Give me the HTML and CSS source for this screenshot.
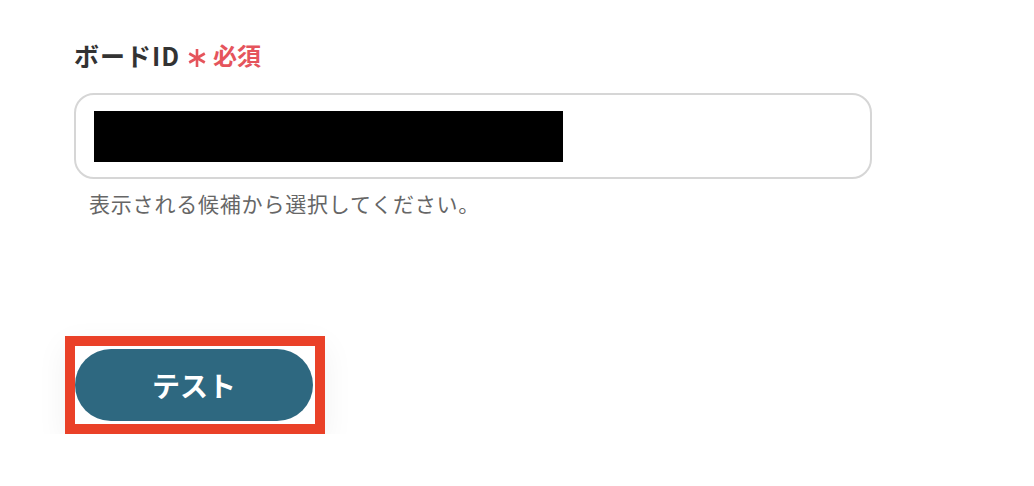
FILE: index.html
```html
<!DOCTYPE html>
<html lang="ja">
<head>
    <meta charset="UTF-8">
    <meta name="viewport" content="width=device-width, initial-scale=1.0">
    <title>ボードID</title>
    <link rel="stylesheet" href="styles.css">
</head>
<body>
    <div class="field">
        <label class="field-label" for="boardId">
            ボードID
            <svg class="required-mark" width="18" height="18" viewBox="0 0 18 18" aria-hidden="true">
                <g stroke="#e5545c" stroke-width="2.6" stroke-linecap="butt">
                    <line x1="9" y1="0" x2="9" y2="18"/>
                    <line x1="1.2" y1="4.5" x2="16.8" y2="13.5"/>
                    <line x1="1.2" y1="13.5" x2="16.8" y2="4.5"/>
                </g>
            </svg>
            <span class="required-text">必須</span>
        </label>
        <div class="input-box" id="boardId">
            <div class="redacted"></div>
        </div>
        <p class="hint">表示される候補から選択してください。</p>
    </div>

    <div class="actions">
        <div class="highlight">
            <button type="button" class="btn-test">テスト</button>
        </div>
    </div>
</body>
</html>
```

FILE: styles.css
```css
body {
    margin: 0;
    background: #fff;
    font-family: "Noto Sans CJK JP", "Noto Sans", sans-serif;
}

.field {
    padding: 38px 0 0 74px;
    width: 798px;
}

.field-label {
    display: flex;
    align-items: center;
    font-size: 25px;
    line-height: 34px;
    letter-spacing: 1px;
    font-weight: bold;
    color: #333;
}

.required-mark {
    margin-left: 8px;
    margin-top: 6px;
}

.required-text {
    margin-left: 7px;
    font-size: 24px;
    letter-spacing: 0;
    color: #e5545c;
}

.input-box {
    margin-top: 21px;
    border: 2px solid #d6d6d6;
    border-radius: 20px;
    padding: 16px 18px;
    height: 50px;
}

.redacted {
    width: 469px;
    height: 51px;
    background: #000;
}

.hint {
    margin: 9px 0 0 15px;
    font-size: 21px;
    line-height: 30px;
    letter-spacing: 0.8px;
    color: #666;
}

.actions {
    padding: 118px 0 0 65px;
}

.highlight {
    display: inline-block;
    border: 10px solid #ea4128;
    padding: 3px 2px 3px 0;
    box-shadow: 0 10px 30px rgba(0, 0, 0, 0.06);
}

.btn-test {
    display: block;
    width: 238px;
    height: 72px;
    border: none;
    border-radius: 36px;
    background: #2e6880;
    color: #fff;
    font-family: "Noto Sans CJK JP", "Noto Sans", sans-serif;
    font-size: 28px;
    font-weight: bold;
    cursor: pointer;
}
```
